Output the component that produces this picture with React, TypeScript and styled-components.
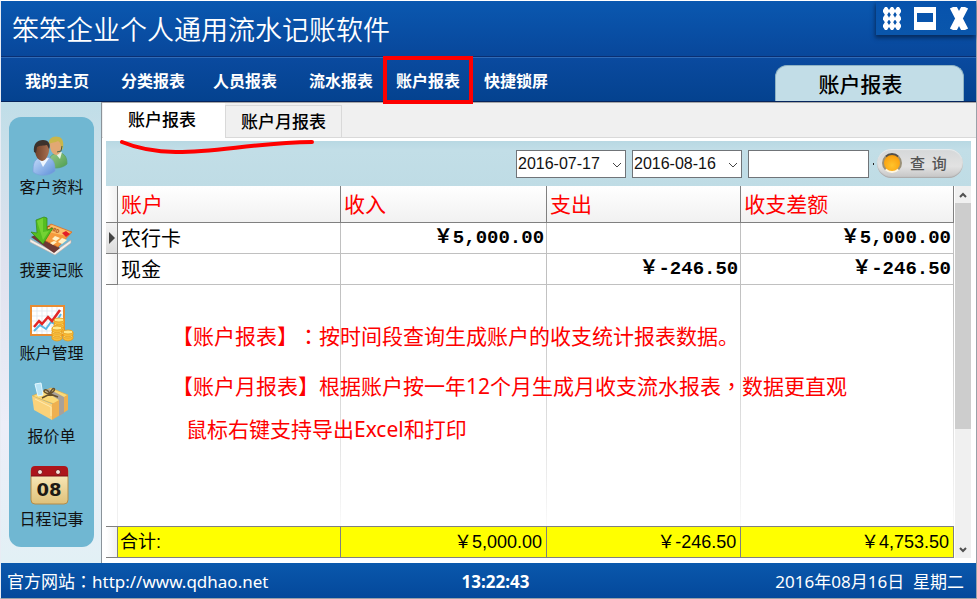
import React from "react";
import styled, { createGlobalStyle } from "styled-components";

const GlobalStyle = createGlobalStyle`
  *, *::before, *::after { box-sizing: border-box; }
  body { margin: 0; background: #fff; }
  button, select, input { font: inherit; margin: 0; }
`;

const cjk = `"Noto Sans CJK SC", sans-serif`;

const Window = styled.div`
  height: 100vh;
  min-height: 560px;
  display: flex;
  flex-direction: column;
  border: 1px solid #9aa0a8;
  border-top-color: #fff;
  border-left-color: #e8ecf4;
  font-family: ${cjk};
  color: #000;
`;

const TitleBar = styled.header`
  flex: none;
  height: 56px;
  display: flex;
  justify-content: space-between;
  align-items: flex-start;
  background: linear-gradient(#0a58b0, #08479b);
  border-bottom: 1px solid #0a2f72;
`;

const Title = styled.h1`
  margin: 0;
  padding-left: 11px;
  font-size: 27px;
  line-height: 56px;
  font-weight: 350;
  color: #fff;
`;

const WindowButtons = styled.div`
  display: flex;
  align-items: center;
  gap: 12px;
  height: 34px;
  padding: 0 6px 0 6px;
  background: linear-gradient(#0753ad, #0a56ab);
  box-shadow: -1px 3px 4px #062c60;
`;

const WindowButton = styled.button`
  display: block;
  border: 0;
  padding: 0;
  background: none;
  line-height: 0;
`;

const NavBar = styled.nav`
  flex: none;
  height: 45px;
  display: flex;
  justify-content: space-between;
  align-items: flex-end;
  background: linear-gradient(#0a4a9f, #04428f);
  border-top: 1px solid #2f6bb8;
  border-bottom: 1px solid #06245c;
`;

const NavList = styled.div`
  display: flex;
  align-self: stretch;
  align-items: center;
  padding-left: 12px;
`;

const NavLink = styled.a<{ $marked?: boolean; $gap?: number }>`
  display: flex;
  align-items: center;
  justify-content: center;
  position: relative;
  z-index: 1;
  height: 48px;
  padding: 0 ${(p) => (p.$marked ? 9 : 12)}px;
  margin-left: ${(p) => p.$gap ?? 0}px;
  border: ${(p) => (p.$marked ? "4px solid #fe0000" : "0")};
  font-size: 16px;
  line-height: 24px;
  font-weight: 700;
  color: #fff;
  text-decoration: none;
  white-space: nowrap;
`;

const PageTab = styled.div`
  flex: none;
  width: 189px;
  height: 36px;
  margin-right: 12px;
  padding-right: 18px;
  border: 1px solid #8eb3c4;
  border-bottom: 0;
  border-radius: 12px 12px 0 0;
  background: #c2dde7;
  font-size: 21px;
  line-height: 35px;
  font-weight: 500;
  text-align: center;
`;

const Body = styled.div`
  flex: 1;
  min-height: 0;
  display: flex;
`;

const Sidebar = styled.aside`
  flex: none;
  width: 100px;
  display: flex;
  padding: 15px 7px 16px 8px;
  background: linear-gradient(#c0dee8, #e0e2ee 35%, #eceef8 70%, #e2f0f5);
`;

const SidePanel = styled.div`
  flex: 1;
  display: flex;
  flex-direction: column;
  align-items: center;
  gap: 19px;
  padding-top: 15px;
  border-radius: 12px;
  background: #70b7d2;
`;

const SideItem = styled.button`
  display: flex;
  flex-direction: column;
  align-items: center;
  border: 0;
  padding: 0;
  background: none;
  color: #111;
  font-size: 16px;
  line-height: 20px;
`;

const SideIcon = styled.svg`
  display: block;
  width: 46px;
  height: 44px;
`;

const Content = styled.main`
  position: relative;
  flex: 1;
  min-width: 0;
  display: flex;
  flex-direction: column;
  border-left: 1px solid #8a939a;
  border-top: 1px solid #a9a9a9;
  background: #fff;
  padding-bottom: 5px;
`;

const TabStrip = styled.div`
  flex: none;
  height: 35px;
  display: flex;
  align-items: stretch;
  padding-left: 1px;
  background: #f0f0f0;
  border-bottom: 1px solid #d9d9d9;
`;

const Tab = styled.button<{ $active?: boolean }>`
  border: ${(p) => (p.$active ? "0" : "1px solid #d9d9d9")};
  border-bottom: 0;
  width: ${(p) => (p.$active ? 122 : 117)}px;
  margin: ${(p) => (p.$active ? "0 0 -1px" : "2px 0 0")};
  padding: ${(p) => (p.$active ? "0 4px 3px 0" : "0 0 2px")};
  background: ${(p) => (p.$active ? "#fff" : "#f0f0f0")};
  color: #000;
  font-size: 17px;
  line-height: 24px;
  font-weight: 500;
`;

const Underline = styled.svg`
  position: absolute;
  left: 17px;
  top: 34px;
  width: 196px;
  height: 20px;
  pointer-events: none;
`;

const Toolbar = styled.form`
  flex: none;
  display: flex;
  justify-content: flex-end;
  align-items: center;
  gap: 6px;
  height: 45px;
  margin: 3px 5px 0 4px;
  padding-right: 8px;
  background: linear-gradient(#b8d8e3, #c2dee7 20%, #bfdce5);
`;

const SelectBox = styled.span`
  position: relative;
  width: 110px;
  height: 28px;
`;

const DateSelect = styled.select`
  appearance: none;
  width: 100%;
  height: 100%;
  padding: 0 18px 0 1px;
  border: 1px solid #707478;
  border-radius: 0;
  background: #fff;
  color: #111;
  font-family: "Liberation Sans", ${cjk};
  font-size: 16px;
`;

const SelectArrow = styled.svg`
  position: absolute;
  right: 5px;
  top: 12px;
  width: 8px;
  height: 6px;
  pointer-events: none;
`;

const SearchInput = styled.input`
  width: 121px;
  height: 28px;
  border: 1px solid #707478;
  background: #fff;
  padding: 0 4px;
  font-size: 16px;
`;

const Dot = styled.span`
  width: 1px;
  height: 2px;
  margin: 0 -3px 0 -2px;
  background: #222;
`;

const QueryButton = styled.button`
  display: flex;
  align-items: center;
  gap: 8px;
  width: 86px;
  height: 29px;
  padding: 0 0 2px 5px;
  border: 0;
  border-radius: 15px;
  background: linear-gradient(#d5d7d8, #e2e2e2 60%, #c4c4c4);
  box-shadow: inset 0 -1px 1px #aaa, inset 0 1px 1px #e8eef0;
  color: #555;
  font-size: 15px;
  line-height: 20px;
  font-weight: 500;
  white-space: pre;
`;

const Lamp = styled.span`
  width: 20px;
  height: 20px;
  border-radius: 50%;
  border: 2px solid #9a9078;
  border-top-color: #54504c;
  border-bottom-color: #fff6e0;
  background: radial-gradient(circle at 50% 65%, #ffc42c, #fba412 65%, #d88400);
`;

const GridArea = styled.div`
  position: relative;
  flex: 1;
  min-height: 0;
  display: flex;
  margin: 0 5px 0 4px;
`;

const TableBox = styled.div`
  flex: 1;
  min-width: 0;
`;

const Table = styled.table`
  width: 100%;
  height: 100%;
  table-layout: fixed;
  border-collapse: separate;
  border-spacing: 0;
`;

const Col = styled.col<{ $w: string }>`
  width: ${(p) => p.$w};
`;

const HeadCell = styled.th`
  height: 37px;
  padding: 0 0 2px 3px;
  border-right: 1px solid #808080;
  border-bottom: 1px solid #808080;
  background: linear-gradient(#fff, #f1f1f1);
  color: #f00;
  font-size: 21px;
  line-height: 30px;
  font-weight: 400;
  text-align: left;
`;

const Indicator = styled.td<{ $current?: boolean; $plain?: boolean; $foot?: boolean }>`
  padding: 0 0 0 3px;
  border-right: 1px solid ${(p) => (p.$plain ? "#f0f0f0" : "#808080")};
  border-bottom: ${(p) => (p.$plain ? "0" : "1px solid #808080")};
  border-top: ${(p) => (p.$foot ? "1px solid #808080" : "0")};
  background: ${(p) => (p.$plain ? "#fff" : p.$current ? "linear-gradient(#f4f4f4, #dcdcdc)" : "linear-gradient(90deg, #fff, #f1f1f1)")};
  line-height: 0;
`;

const Cell = styled.td<{ $num?: boolean }>`
  height: 31px;
  padding: 0 2px 0 3px;
  border-right: 1px solid #c0c0c0;
  border-bottom: 1px solid #c0c0c0;
  font-family: ${(p) => (p.$num ? `"Liberation Mono", ${cjk}` : cjk)};
  font-size: ${(p) => (p.$num ? 19 : 20)}px;
  line-height: 28px;
  font-weight: ${(p) => (p.$num ? 700 : 400)};
  text-align: ${(p) => (p.$num ? "right" : "left")};
`;

const BlankCell = styled.td`
  padding: 0;
  background: linear-gradient(#c0c0c0, #e0e0e0 60%, #fafafa) right / 1px 100% no-repeat;
`;

const FootCell = styled.td<{ $num?: boolean }>`
  height: 32px;
  padding: 0 4px 0 2px;
  border: 1px solid #808080;
  border-left: 0;
  background: #ff0;
  font-family: "Liberation Sans", ${cjk};
  font-size: 18px;
  line-height: 28px;
  text-align: ${(p) => (p.$num ? "right" : "left")};
`;

const Scrollbar = styled.div`
  flex: none;
  width: 16px;
  margin-left: 1px;
  display: flex;
  flex-direction: column;
  align-items: center;
  background: #f0f0f0;
`;

const ScrollArrow = styled.svg`
  flex: none;
  width: 16px;
  height: 17px;
`;

const ScrollTrack = styled.div`
  flex: 1;
  width: 100%;
`;

const ScrollThumb = styled.div`
  height: 67%;
  background: #cdcdcd;
`;

const Notes = styled.div`
  position: absolute;
  left: 66px;
  top: 134px;
  color: #fe0000;
  font-family: "Noto Sans", ${cjk};
  font-size: 21px;
  line-height: 30px;
  white-space: nowrap;
  text-spacing-trim: space-all;
`;

const Note = styled.p<{ $indent: number; $gap: number }>`
  margin: 0 0 ${(p) => p.$gap}px ${(p) => p.$indent}px;
`;

const CenteredMark = styled.span`
  font-family: "Noto Sans CJK TC", sans-serif;
`;

const StatusBar = styled.footer`
  flex: none;
  height: 35px;
  display: grid;
  grid-template-columns: 1fr auto 1fr;
  align-items: center;
  padding: 2px 12px 0 6px;
  background: linear-gradient(#0a58ac, #04489b);
  color: #fff;
  font-family: "Noto Sans", ${cjk};
  font-size: 17px;
  line-height: 24px;
  white-space: pre;
`;

const SiteLink = styled.a`
  color: inherit;
  text-decoration: none;
`;

const Clock = styled.strong`
  padding-left: 20px;
  font-weight: 700;
`;

const Today = styled.span`
  text-align: right;
`;

const PeopleIcon = () => (
  <SideIcon viewBox="0 0 46 44" aria-hidden="true">
    <defs>
      <linearGradient id="blueShirt" x2="1" y2="1"><stop stopColor="#c6dcfa" /><stop offset="1" stopColor="#5c8fd8" /></linearGradient>
      <linearGradient id="greenShirt" x2="1" y2="1"><stop stopColor="#9bc98a" /><stop offset="1" stopColor="#4c9e50" /></linearGradient>
      <linearGradient id="face" x2="1"><stop stopColor="#6f4029" /><stop offset="1" stopColor="#a87050" /></linearGradient>
    </defs>
    <path d="M21 35c0-9 1-11 5-13l7-1c5 2 6 6 6 11-4 4-12 5-18 3z" fill="url(#greenShirt)" stroke="#5a9c62" strokeWidth=".7" />
    <path d="M27 21l5 6 2-7z" fill="#e8f4e4" />
    <path d="M22 13c0-5 3-7 7-7s6 3 5 9c-1 5-3 8-6 8-4-1-6-5-6-10z" fill="#e2a873" />
    <path d="M21 12c-1-6 5-9 10-7 4 1 5 6 4 12l-2 1c0-5 0-7-3-9-3 2-6 1-9 3z" fill="#c9b64a" />
    <path d="M34 14l-1 5-4 1" fill="none" stroke="#496246" />
    <path d="M5 40c0-8 1-12 6-14l9-1c6 2 7 7 7 14-5 5-16 6-22 1z" fill="url(#blueShirt)" stroke="#7aa2da" strokeWidth=".7" />
    <path d="M11 27l4 8 6-9z" fill="#eef6ff" />
    <path d="M7 18c0-6 3-8 8-8s7 4 6 9c-1 6-4 10-7 10-4-1-7-5-7-11z" fill="url(#face)" />
    <path d="M6 20c-1-8 3-12 9-12 6 0 8 5 6 9l-2-4c-4 1-7 0-10 2l-1 6z" fill="#3c322c" />
  </SideIcon>
);

const CardIcon = () => (
  <SideIcon viewBox="0 0 46 44" aria-hidden="true">
    <path d="M2 24L26 37 43 25v3L27 40 2 27z" fill="#f5eee8" stroke="#b9aaa2" strokeWidth=".6" />
    <path d="M3 22l6-3 23 14-6 5z" fill="#6d3935" />
    <path d="M14 16l9-7 21 8-14 15-18-9z" fill="#f69a3d" stroke="#df6c22" strokeWidth=".7" />
    <path d="M15 16l9-6 18 7-3 4z" fill="#fdbe69" />
    <text x="18" y="14" fontSize="5" fontWeight="700" fill="#a84713" transform="rotate(19 18 14)">CARD</text>
    <path d="M34 18l4-2 4 3-4 3z" fill="#e31e28" />
    <path d="M27 21l5 2-4 3-4-2z M34 23l5 2-5 4-4-2z M26 26l3 1-4 3-3-2z" fill="#fff0c7" />
    <path d="M8 5l8-3 3 1v12l6-2-10 16L3 17l6 1z" fill="#55bd21" stroke="#328b13" strokeWidth=".7" />
    <path d="M9 6l6-3v14l6-1-6 9z" fill="#82dc3c" opacity=".7" />
  </SideIcon>
);

const Coins = ({ x, y, n }: { x: number; y: number; n: number }) => (
  <g stroke="#e69b18" strokeWidth=".8">
    {Array.from({ length: n }, (_, i) => (
      <g key={i}>
        <path d={`M${x - 5} ${y - i * 4}v3q5 4 10 0v-3z`} fill="#f8bd3c" />
        <ellipse cx={x} cy={y - i * 4} rx="5" ry="2" fill="#ffe88a" />
      </g>
    ))}
  </g>
);

const ChartIcon = () => (
  <SideIcon viewBox="0 0 46 44" aria-hidden="true">
    <rect x="3" y="8" width="33" height="29" fill="#fff" stroke="#e98c32" strokeWidth="2" />
    <path d="M4 13h31M4 18h31M4 23h31M4 28h31M4 33h31M9 9v27M14 9v27M19 9v27M24 9v27M29 9v27" stroke="#dbe2e9" strokeWidth=".7" />
    <path d="M6 33l6-6 6 4 5-7 4 2 6-10" fill="none" stroke="#58b8e6" strokeWidth="2" />
    <path d="M6 29l5-6 3 3 6-7 4 4 8-11" fill="none" stroke="#e22525" strokeWidth="2.5" />
    <Coins x={31} y={30} n={3} />
    <Coins x={29} y={38} n={3} />
    <Coins x={40} y={38} n={2} />
  </SideIcon>
);

const BoxIcon = () => (
  <SideIcon viewBox="0 0 46 44" aria-hidden="true">
    <path d="M4 15l19-8 17 7-14 9z" fill="#fbda78" stroke="#e0ad4c" strokeWidth=".7" />
    <path d="M7 3l6-1 2 12-5 1z" fill="#b8e4f7" stroke="#e4f8ff" />
    <path d="M4 15l20 8v16L6 29z" fill="#fad27a" />
    <path d="M24 23l16-9v15L24 39z" fill="#eeb050" />
    <path d="M17 10l4-2 15 8v16l-5 3V19z" fill="#a8a19a" />
    <path d="M22 13c-11-1-4-9 0 0 2-9 9-5 0 0l-8 4m8-4l8 3" fill="none" stroke="#66502c" strokeWidth="1.5" />
    <path d="M7 18l16 8v9" fill="none" stroke="#ffeab0" />
  </SideIcon>
);

const CalendarIcon = () => (
  <SideIcon viewBox="0 0 46 44" aria-hidden="true">
    <defs>
      <linearGradient id="paper" x2="0" y2="1"><stop stopColor="#fff2c8" /><stop offset="1" stopColor="#dfc17a" /></linearGradient>
    </defs>
    <rect x="3" y="3" width="37" height="37" rx="4" fill="url(#paper)" stroke="#b48c4a" />
    <path d="M3 12V6q0-4 4-4h29q4 0 4 4v6z" fill="#ad151b" />
    <path d="M3 12h37" stroke="#7d1014" />
    <circle cx="12" cy="8" r="2.5" fill="#f4e4dc" stroke="#7d1014" />
    <circle cx="30" cy="8" r="2.5" fill="#f4e4dc" stroke="#7d1014" />
    <text x="21" y="32" textAnchor="middle" fontFamily="DejaVu Sans, sans-serif" fontSize="18" fontWeight="700" fill="#1d1a14">08</text>
  </SideIcon>
);

const navItems = [
  { text: "我的主页", gap: 0 },
  { text: "分类报表", gap: 8 },
  { text: "人员报表", gap: 4 },
  { text: "流水报表", gap: 8 },
  { text: "账户报表", gap: -2, marked: true },
  { text: "快捷锁屏", gap: -1 },
];

const sideItems = [
  { text: "客户资料", Icon: PeopleIcon },
  { text: "我要记账", Icon: CardIcon },
  { text: "账户管理", Icon: ChartIcon },
  { text: "报价单", Icon: BoxIcon },
  { text: "日程记事", Icon: CalendarIcon },
];

const rows = [
  { name: "农行卡", income: "￥5,000.00", expense: "", balance: "￥5,000.00" },
  { name: "现金", income: "", expense: "￥-246.50", balance: "￥-246.50" },
];

const DateField = ({ label, value }: { label: string; value: string }) => (
  <SelectBox>
    <DateSelect aria-label={label} defaultValue={value}>
      <option>{value}</option>
    </DateSelect>
    <SelectArrow viewBox="0 0 8 6" aria-hidden="true">
      <path d="M0 1l4 4 4-4" fill="none" stroke="#444" />
    </SelectArrow>
  </SelectBox>
);

export default function App() {
  return (
    <>
      <GlobalStyle />
      <Window>
        <TitleBar>
          <Title>笨笨企业个人通用流水记账软件</Title>
          <WindowButtons>
            <WindowButton aria-label="菜单">
              <svg width="20" height="23" viewBox="0 0 20 23" fill="#fff">
                {[4, 11.5, 19].map((y) =>
                  [4, 10, 16].map((x) => (
                    <path key={`${x}-${y}`} d={`M${x - 1} ${y - 4}h2l2 3v2l-2 3h-2l-2-3v-2z`} />
                  ))
                )}
              </svg>
            </WindowButton>
            <WindowButton aria-label="最大化">
              <svg width="22" height="23" viewBox="0 0 22 23">
                <path d="M0 0h22v23H0zM3 6v9h16V6z" fill="#fff" fillRule="evenodd" />
              </svg>
            </WindowButton>
            <WindowButton aria-label="关闭">
              <svg width="22" height="23" viewBox="0 0 22 23">
                <path d="M5 0l12 23M17 0L5 23" stroke="#fff" strokeWidth="7" />
              </svg>
            </WindowButton>
          </WindowButtons>
        </TitleBar>

        <NavBar>
          <NavList>
            {navItems.map((n) => (
              <NavLink key={n.text} href="#" $marked={n.marked} $gap={n.gap}>
                {n.text}
              </NavLink>
            ))}
          </NavList>
          <PageTab>账户报表</PageTab>
        </NavBar>

        <Body>
          <Sidebar>
            <SidePanel>
              {sideItems.map(({ text, Icon }) => (
                <SideItem key={text}>
                  <Icon />
                  {text}
                </SideItem>
              ))}
            </SidePanel>
          </Sidebar>

          <Content>
            <TabStrip>
              <Tab $active>账户报表</Tab>
              <Tab>账户月报表</Tab>
            </TabStrip>
            <Underline viewBox="0 0 196 20" aria-hidden="true">
              <path d="M3 5C56 27 112 6 193 5" fill="none" stroke="#fe0000" strokeWidth="4" strokeLinecap="round" />
            </Underline>

            <Toolbar onSubmit={(e) => e.preventDefault()}>
              <DateField label="开始日期" value="2016-07-17" />
              <DateField label="结束日期" value="2016-08-16" />
              <SearchInput type="text" aria-label="关键字" />
              <Dot />
              <QueryButton type="submit">
                <Lamp />
                查  询
              </QueryButton>
            </Toolbar>

            <GridArea>
              <TableBox>
                <Table>
                  <colgroup>
                    <Col $w="12px" />
                    <Col $w="26.3%" />
                    <Col $w="24.3%" />
                    <Col $w="22.9%" />
                    <Col $w="auto" />
                  </colgroup>
                  <thead>
                    <tr>
                      <Indicator />
                      <HeadCell>账户</HeadCell>
                      <HeadCell>收入</HeadCell>
                      <HeadCell>支出</HeadCell>
                      <HeadCell>收支差额</HeadCell>
                    </tr>
                  </thead>
                  <tbody>
                    {rows.map((r, i) => (
                      <tr key={r.name}>
                        <Indicator $current={i === 0}>
                          {i === 0 && (
                            <svg width="6" height="12" viewBox="0 0 6 12">
                              <path d="M0 0l6 6-6 6z" fill="#444" />
                            </svg>
                          )}
                        </Indicator>
                        <Cell>{r.name}</Cell>
                        <Cell $num>{r.income}</Cell>
                        <Cell $num>{r.expense}</Cell>
                        <Cell $num>{r.balance}</Cell>
                      </tr>
                    ))}
                    <tr>
                      <Indicator $plain />
                      <BlankCell />
                      <BlankCell />
                      <BlankCell />
                      <BlankCell />
                    </tr>
                  </tbody>
                  <tfoot>
                    <tr>
                      <Indicator $foot />
                      <FootCell>合计:</FootCell>
                      <FootCell $num>￥5,000.00</FootCell>
                      <FootCell $num>￥-246.50</FootCell>
                      <FootCell $num>￥4,753.50</FootCell>
                    </tr>
                  </tfoot>
                </Table>
              </TableBox>
              <Scrollbar>
                <ScrollArrow viewBox="0 0 16 17" aria-hidden="true">
                  <path d="M5 11l3-3 3 3" fill="none" stroke="#505050" strokeWidth="2" />
                </ScrollArrow>
                <ScrollTrack>
                  <ScrollThumb />
                </ScrollTrack>
                <ScrollArrow viewBox="0 0 16 17" aria-hidden="true">
                  <path d="M5 7l3 3 3-3" fill="none" stroke="#505050" strokeWidth="2" />
                </ScrollArrow>
              </Scrollbar>
              <Notes>
                <Note $indent={0} $gap={19}>
                  【账户报表】<CenteredMark>：</CenteredMark>按时间段查询生成账户的收支统计报表数据。
                </Note>
                <Note $indent={0} $gap={13}>
                  【账户月报表】根据账户按一年12个月生成月收支流水报表<CenteredMark>，</CenteredMark>数据更直观
                </Note>
                <Note $indent={14} $gap={0}>鼠标右键支持导出Excel和打印</Note>
              </Notes>
            </GridArea>
          </Content>
        </Body>

        <StatusBar>
          <span>
            官方网站<CenteredMark>：</CenteredMark>
            <SiteLink href="http://www.qdhao.net">http://www.qdhao.net</SiteLink>
          </span>
          <Clock>13:22:43</Clock>
          <Today>2016年08月16日  星期二</Today>
        </StatusBar>
      </Window>
    </>
  );
}
